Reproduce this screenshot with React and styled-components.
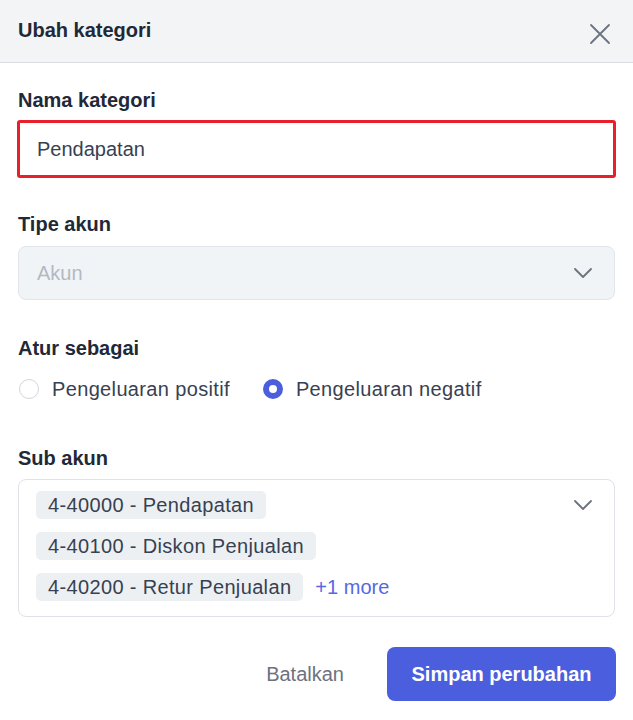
import React from "react"
import styled, { createGlobalStyle } from "styled-components"

const GlobalStyle = createGlobalStyle`
	* {
		box-sizing: border-box;
	}
	body {
		margin: 0;
		background: #ffffff;
		font-family: "Liberation Sans", Arial, sans-serif;
		color: #1f2937;
	}
`

const Dialog = styled.div`
	width: 633px;
	min-height: 720px;
	display: flex;
	flex-direction: column;
	background: #ffffff;
`

const Header = styled.header`
	height: 63px;
	padding: 0 22px 0 18px;
	display: flex;
	align-items: center;
	justify-content: space-between;
	background: #f3f4f6;
	border-bottom: 1px solid #d9dce1;
`

const Title = styled.h2`
	margin: 0 0 2px;
	font-size: 20px;
	font-weight: 700;
	color: #1f2937;
`

const CloseButton = styled.button`
	border: 0;
	background: none;
	padding: 0;
	margin-top: 6px;
	display: flex;
	cursor: pointer;
	color: #6b7280;
`

const Body = styled.div`
	padding: 25px 18px 0;
	display: flex;
	flex-direction: column;
`

const Field = styled.div`
	display: flex;
	flex-direction: column;
	margin-bottom: ${(p) => p.$gap ?? 34}px;
`

const Label = styled.label`
	font-size: 20px;
	line-height: 24px;
	font-weight: 700;
	color: #1f2937;
	margin-bottom: ${(p) => p.$gap ?? 8}px;
`

const TextInput = styled.input`
	height: 58px;
	width: 599px;
	margin-left: -1px;
	padding: 0 17px;
	border: 3px solid #e8202c;
	border-radius: 3px;
	font-family: inherit;
	font-size: 20px;
	color: #374151;
	outline: none;
`

const SelectBox = styled.div`
	height: 54px;
	padding: 0 22px 0 18px;
	display: flex;
	align-items: center;
	justify-content: space-between;
	background: #f1f4f6;
	border: 1px solid #e2e6ea;
	border-radius: 8px;
	font-size: 20px;
	color: #b3b9c2;
`

const RadioGroup = styled.div`
	display: flex;
	align-items: center;
	gap: 33px;
	padding-left: 1px;
`

const RadioOption = styled.label`
	display: flex;
	align-items: center;
	gap: 13px;
	font-size: 20px;
	letter-spacing: 0.35px;
	line-height: 24px;
	color: #374151;
	cursor: pointer;
`

const RadioDot = styled.span`
	width: 20px;
	height: 20px;
	border-radius: 50%;
	background: #ffffff;
	border: ${(p) => (p.$checked ? "6px solid #4b5fde" : "1.5px solid #d1d5db")};
`

const MultiBox = styled.div`
	padding: 11px 22px 15px 17px;
	display: flex;
	justify-content: space-between;
	align-items: flex-start;
	border: 1px solid #dfe2e6;
	border-radius: 8px;
`

const ChipList = styled.div`
	display: flex;
	flex-direction: column;
	align-items: flex-start;
	gap: 13px;
`

const ChipRow = styled.div`
	display: flex;
	align-items: center;
	gap: 12px;
`

const Chip = styled.span`
	height: 28px;
	padding: 0 12px;
	display: inline-flex;
	align-items: center;
	background: #edf0f3;
	border-radius: 5px;
	font-size: 20px;
	letter-spacing: 0.35px;
	color: #374151;
`

const More = styled.span`
	font-size: 20px;
	color: #5468e3;
`

const Chevron = styled.span`
	display: flex;
	color: #6b7280;
	margin-top: ${(p) => p.$top ?? 0}px;
`

const Footer = styled.footer`
	margin-top: 30px;
	padding: 0 17px 20px;
	display: flex;
	justify-content: flex-end;
	align-items: center;
	gap: 43px;
`

const GhostButton = styled.button`
	border: 0;
	background: none;
	padding: 0;
	font-family: inherit;
	font-size: 20px;
	color: #6b7280;
	cursor: pointer;
`

const PrimaryButton = styled.button`
	height: 54px;
	width: 229px;
	border: 0;
	border-radius: 8px;
	background: #4b5fde;
	font-family: inherit;
	font-size: 20px;
	font-weight: 700;
	color: #ffffff;
	cursor: pointer;
`

const CloseIcon = () => (
	<svg width="22" height="22" viewBox="0 0 22 22" fill="none" stroke="currentColor" strokeWidth="1.8" strokeLinecap="round">
		<path d="M2 2l18 18M20 2L2 20" />
	</svg>
)

const ChevronIcon = () => (
	<svg width="18" height="10" viewBox="0 0 18 10" fill="none" stroke="currentColor" strokeWidth="1.8" strokeLinecap="round" strokeLinejoin="round">
		<path d="M1 1l8 8 8-8" />
	</svg>
)

const subAccounts = ["4-40000 - Pendapatan", "4-40100 - Diskon Penjualan", "4-40200 - Retur Penjualan"]

const App = () => {
	const last = subAccounts.length - 1

	return (
		<>
			<GlobalStyle />
			<Dialog>
				<Header>
					<Title>Ubah kategori</Title>
					<CloseButton aria-label="close">
						<CloseIcon />
					</CloseButton>
				</Header>
				<Body>
					<Field>
						<Label>Nama kategori</Label>
						<TextInput defaultValue="Pendapatan" />
					</Field>
					<Field $gap={36}>
						<Label $gap={10}>Tipe akun</Label>
						<SelectBox>
							Akun
							<Chevron>
								<ChevronIcon />
							</Chevron>
						</SelectBox>
					</Field>
					<Field $gap={45}>
						<Label $gap={17}>Atur sebagai</Label>
						<RadioGroup>
							<RadioOption>
								<RadioDot />
								Pengeluaran positif
							</RadioOption>
							<RadioOption>
								<RadioDot $checked />
								Pengeluaran negatif
							</RadioOption>
						</RadioGroup>
					</Field>
					<Field $gap={0}>
						<Label $gap={9}>Sub akun</Label>
						<MultiBox>
							<ChipList>
								{subAccounts.map((s, i) =>
									i === last ? (
										<ChipRow key={s}>
											<Chip>{s}</Chip>
											<More>+1 more</More>
										</ChipRow>
									) : (
										<Chip key={s}>{s}</Chip>
									)
								)}
							</ChipList>
							<Chevron $top={9}>
								<ChevronIcon />
							</Chevron>
						</MultiBox>
					</Field>
				</Body>
				<Footer>
					<GhostButton>Batalkan</GhostButton>
					<PrimaryButton>Simpan perubahan</PrimaryButton>
				</Footer>
			</Dialog>
		</>
	)
}

export default App
